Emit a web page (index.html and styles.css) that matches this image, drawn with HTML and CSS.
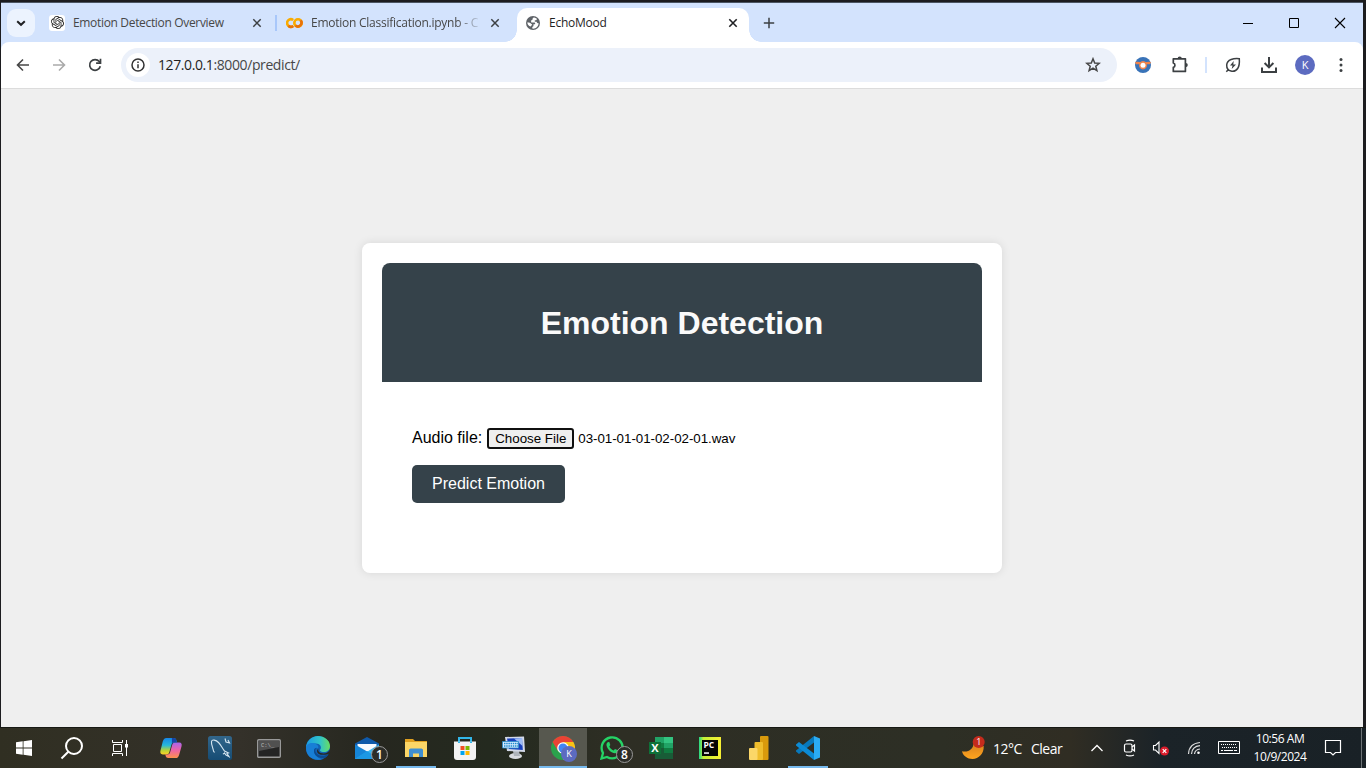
FILE: index.html
```html
<!DOCTYPE html>
<html lang="en">
<head>
<meta charset="utf-8">
<title>EchoMood</title>
<link rel="stylesheet" href="styles.css">
</head>
<body>
<div class="window">
  <header class="tabstrip">
    <div class="tab-search"><svg width="12" height="12" viewBox="0 0 12 12"><path d="M2.2 4.2 6 7.8 9.8 4.2" fill="none" stroke="#202124" stroke-width="2"/></svg></div>
    <div class="tab first">
      <span class="gpt"><svg width="13" height="13" viewBox="0 0 24 24" fill="#222"><path d="M22.2819 9.8211a5.9847 5.9847 0 0 0-.5157-4.9108 6.0462 6.0462 0 0 0-6.5098-2.9A6.0651 6.0651 0 0 0 4.9807 4.1818a5.9847 5.9847 0 0 0-3.9977 2.9 6.0462 6.0462 0 0 0 .7427 7.0966 5.98 5.98 0 0 0 .511 4.9107 6.051 6.051 0 0 0 6.5146 2.9001A5.9847 5.9847 0 0 0 13.2599 24a6.0557 6.0557 0 0 0 5.7718-4.2058 5.9894 5.9894 0 0 0 3.9977-2.9001 6.0557 6.0557 0 0 0-.7475-7.0729zm-9.022 12.6081a4.4755 4.4755 0 0 1-2.8764-1.0408l.1419-.0804 4.7783-2.7582a.7948.7948 0 0 0 .3927-.6813v-6.7369l2.02 1.1686a.071.071 0 0 1 .038.052v5.5826a4.504 4.504 0 0 1-4.4945 4.4944zm-9.6607-4.1254a4.4708 4.4708 0 0 1-.5346-3.0137l.142.0852 4.783 2.7582a.7712.7712 0 0 0 .7806 0l5.8428-3.3685v2.3324a.0804.0804 0 0 1-.0332.0615L9.74 19.9502a4.4992 4.4992 0 0 1-6.1408-1.6464zM2.3408 7.8956a4.485 4.485 0 0 1 2.3655-1.9728V11.6a.7664.7664 0 0 0 .3879.6765l5.8144 3.3543-2.0201 1.1685a.0757.0757 0 0 1-.071 0l-4.8303-2.7865A4.504 4.504 0 0 1 2.3408 7.872zm16.5963 3.8558L13.1038 8.364 15.1192 7.2a.0757.0757 0 0 1 .071 0l4.8303 2.7913a4.4944 4.4944 0 0 1-.6765 8.1042v-5.6772a.79.79 0 0 0-.407-.667zm2.0107-3.0231l-.142-.0852-4.7735-2.7818a.7759.7759 0 0 0-.7854 0L9.409 9.2297V6.8974a.0662.0662 0 0 1 .0284-.0615l4.8303-2.7866a4.4992 4.4992 0 0 1 6.6802 4.66zM8.3065 12.863l-2.02-1.1638a.0804.0804 0 0 1-.038-.0567V6.0742a4.4992 4.4992 0 0 1 7.3757-3.4537l-.142.0805L8.704 5.459a.7948.7948 0 0 0-.3927.6813zm1.0976-2.3654l2.602-1.4998 2.6069 1.4998v2.9994l-2.5974 1.4997-2.6067-1.4997Z"/></svg></span>
      <span class="label l1">Emotion Detection Overview</span>
      <svg class="x" width="10" height="10" viewBox="0 0 10 10"><path d="M1.3 1.3l7.4 7.4M8.7 1.3 1.3 8.7" stroke="#3c4043" stroke-width="1.5"/></svg>
    </div>
    <div class="sep"></div>
    <div class="tab second">
      <svg width="17" height="12" viewBox="0 0 17 12" fill="none" stroke-width="2.6"><path d="M7.2 3.1A3.7 3.7 0 1 0 7.2 8.9" stroke="#f9ab00"/><path d="M2.4 8.7a3.7 3.7 0 0 0 4.8.2" stroke="#e8710a"/><circle cx="12" cy="6" r="3.7" stroke="#f9ab00"/><path d="M9.4 8.6A3.7 3.7 0 0 0 14.6 3.4" stroke="#e8710a"/></svg>
      <span class="label l2">Emotion Classification.ipynb - C</span>
      <svg class="x" width="10" height="10" viewBox="0 0 10 10"><path d="M1.3 1.3l7.4 7.4M8.7 1.3 1.3 8.7" stroke="#3c4043" stroke-width="1.5"/></svg>
    </div>
    <div class="tab active">
      <svg width="14" height="14" viewBox="0 0 14 14"><circle cx="7" cy="7" r="7" fill="#5f6368"/><path d="M8.2 1.4C6.5 1.6 6.3 3 6.6 3.7 5.2 3.8 4.8 5 5.3 6.4h3.2c.8 0 .9 1.3.4 1.8H7.5v1.5c0 .7-.8.9-1.2 1.4v1.5C9.8 13 12.6 10.5 12.6 7c-1.2.6-1.7-.3-2-1.2H8.8V4.2h1.3c.6 0 1-.9.5-1.6C9.8 1.9 9 1.5 8.2 1.4zM1.4 6.2c1 .3 2.6.3 3.3 1.1.5.7 1.1.7 1.5 1.3L4.7 10.6C2.7 10 1.2 8.3 1.4 6.2z" fill="#fff"/></svg>
      <span class="label l3">EchoMood</span>
      <svg class="x" width="10" height="10" viewBox="0 0 10 10"><path d="M1.3 1.3l7.4 7.4M8.7 1.3 1.3 8.7" stroke="#202124" stroke-width="1.6"/></svg>
    </div>
    <svg class="plus" width="12" height="12" viewBox="0 0 12 12"><path d="M6 .8v10.4M.8 6h10.4" stroke="#3c4043" stroke-width="1.5"/></svg>
    <div class="controls">
      <svg width="12" height="12" viewBox="0 0 12 12"><path d="M1 6.5h10" stroke="#000"/></svg>
      <svg width="12" height="12" viewBox="0 0 12 12"><path d="M1.5 1.5h9v9h-9z" fill="none" stroke="#000"/></svg>
      <svg width="12" height="12" viewBox="0 0 12 12"><path d="M1 1l10 10M11 1 1 11" stroke="#000" stroke-width="1.1"/></svg>
    </div>
  </header>
  <div class="toolbar">
    <svg width="14" height="14" viewBox="0 0 14 14"><path d="M13 7H2M7 1.5 1.5 7 7 12.5" fill="none" stroke="#474747" stroke-width="1.6"/></svg>
    <svg width="14" height="14" viewBox="0 0 14 14"><path d="M1 7h11M7 1.5 12.5 7 7 12.5" fill="none" stroke="#aaa" stroke-width="1.6"/></svg>
    <svg width="14" height="14" viewBox="0 0 14 14"><path d="M12.3 8.2A5.4 5.4 0 1 1 11.3 3.6L12 4.6" fill="none" stroke="#3c4043" stroke-width="1.7"/><path d="M12.5 .8V5.2H8.1" fill="none" stroke="#3c4043" stroke-width="1.7"/></svg>
    <div class="omnibox">
      <span class="info"><svg width="14" height="14" viewBox="0 0 14 14"><circle cx="7" cy="7" r="6" fill="none" stroke="#333" stroke-width="1.5"/><path d="M7 6.3v4M7 3.5v1.6" stroke="#333" stroke-width="1.5"/></svg></span>
      <span class="url"><b>127.0.0.1</b>:8000/predict/</span>
      <svg class="star" width="16" height="16" viewBox="0 0 16 16"><path d="M8 1.8 9.7 6l4.6.3-3.5 2.9 1.1 4.5L8 11.2l-3.9 2.5 1.1-4.5L1.7 6.3 6.3 6z" fill="none" stroke="#474747" stroke-width="1.5"/></svg>
    </div>
    <div class="actions">
      <svg width="16" height="16" viewBox="0 0 16 16"><circle cx="8" cy="8" r="8" fill="#3973b8"/><path d="M0 5.3C3 4 5 5.5 5.7 4.8a4 4 0 0 1 4.6 0C11 5.5 13 4 16 5.3L14.8 7.3 11.8 7.2A4 4 0 1 1 4.2 7.2L1 7.3z" fill="#f0834a"/><circle cx="8" cy="8.2" r="2.5" fill="#fff"/></svg>
      <svg width="18" height="18" viewBox="0 0 18 18"><path d="M14.4 2.8H2.3V7a2.3 2.3 0 0 1 0 4.4v4H14.4z" fill="none" stroke="#3c4043" stroke-width="1.7" stroke-linejoin="round"/><path d="M6.6 2.5a2.1 2.1 0 0 1 4.2 0zM14.7 7a2.1 2.1 0 0 1 0 4.200z" fill="#3c4043"/></svg>
      <i></i>
      <svg width="16" height="16" viewBox="0 0 16 16"><path d="M14.3 1.7C9 1.2 2 2.2 1.7 8c-.2 7 8 8 11 3.5 2-3 1.8-7 1.6-9.8zM3.5 12.5 1.3 14.8" fill="none" stroke="#3c4043" stroke-width="1.5"/><path d="M8.7 4 5 8.5h2.5L6.7 12 11 7.4H8.3z" fill="#3c4043"/></svg>
      <svg width="18" height="18" viewBox="0 0 18 18"><path d="M9 1v10M4.6 7 9 11.4 13.4 7M2 11.5V16h14v-4.5" fill="none" stroke="#3c4043" stroke-width="2"/></svg>
      <span class="avatar">K</span>
      <svg width="4" height="16" viewBox="0 0 4 16" fill="#3c4043"><circle cx="2" cy="2.5" r="1.5"/><circle cx="2" cy="8" r="1.5"/><circle cx="2" cy="13.5" r="1.5"/></svg>
    </div>
  </div>
  <main class="page">
    <section class="card">
      <div class="card-head"><h1>Emotion Detection</h1></div>
      <form class="form">
        <div class="file-row"><label>Audio file:</label><button type="button" class="choose">Choose File</button><span class="filename">03-01-01-01-02-02-01.wav</span></div>
        <button type="button" class="predict">Predict Emotion</button>
      </form>
    </section>
  </main>
</div>
<footer class="taskbar">
  <div class="apps">
    <div class="app"><svg width="16" height="16" viewBox="0 0 16 16" fill="#fff"><path d="M0 2.3 6.7 1.3v6.3H0zM7.5 1.2 16 0v7.6H7.5zM0 8.4h6.7v6.3L0 13.8zM7.5 8.4H16V16l-8.5-1.2z"/></svg></div>
    <div class="app"><svg width="24" height="24" viewBox="0 0 24 24" fill="none" stroke="#fff" stroke-width="2"><circle cx="14" cy="10" r="8"/><path d="M8.3 15.7 1.5 22.5"/></svg></div>
    <div class="app"><svg width="16" height="16" viewBox="0 0 16 16"><path d="M.5 0v2.5h10V0M.5 16v-2.5h10V16M1.5 4.5h8v7h-8zM14.5 0v16" fill="none" stroke="#fff"/><path d="M13 4h3v3.5h-3z" fill="#fff"/></svg></div>
    <div class="app gap"><svg width="22" height="22" viewBox="0 0 24 24"><defs><linearGradient id="ca" x2="0" y2="1"><stop stop-color="#1686e8"/><stop offset=".45" stop-color="#28b8d8"/><stop offset=".75" stop-color="#b6d338"/><stop offset="1" stop-color="#ffcf25"/></linearGradient><linearGradient id="cb" x2="0" y2="1"><stop stop-color="#a865ed"/><stop offset=".5" stop-color="#f064a4"/><stop offset="1" stop-color="#ff914b"/></linearGradient></defs><path d="M7 1h8c2 0 2.5 1 3 3l.5 2h-3c-2 0-2.7 1-3.2 3l-2 7c-.6 2-1 3-3.3 3H3c-2.6 0-3-2-2.5-4L3 5c.7-2.5 1.7-4 4-4z" fill="url(#ca)"/><path d="M17 23H9c-2 0-2.5-1-3-3l-.3-1H8c2 0 2.7-1 3.2-3l2-7c.6-2 1.3-3 3.3-3H21c2.6 0 3 2 2.5 4L21 19c-.7 2.5-1.7 4-4 4z" fill="url(#cb)"/><path d="M13 1h2c2 0 2.5 1 3 3l.5 2h-3c-1 0-2 .5-2.5 1.5z" fill="#1745a5"/></svg></div>
    <div class="app"><svg width="24" height="24" viewBox="0 0 24 24"><defs><linearGradient id="my" x2="0" y2="1"><stop stop-color="#32668b"/><stop offset="1" stop-color="#164c74"/></linearGradient></defs><rect width="24" height="24" rx="2.5" fill="url(#my)"/><path d="M6.5 16.5 5.5 15C5 12 3 8 3.5 5.5 4 3 8 4 10.5 6.5c3 3 4 6.5 6 8.5l4 2-1.5.5 2 3-3-1.5-1.5-2c-.5 1-1 1-1.5.5M17 2.5l1 3.5 3.5 1-1.5-3" fill="none" stroke="#d5e5f0" stroke-width="1.1"/></svg></div>
    <div class="app"><svg width="24" height="19" viewBox="0 0 24 19"><rect x=".7" y=".7" width="22.6" height="17.6" rx="1" fill="#242424" stroke="#999" stroke-width="1.4"/><path d="M2 2h20v6L2 12z" fill="#505050"/><text x="4" y="8" font-size="5.5" fill="#bbb" class="mono">C:\_</text></svg></div>
    <div class="app"><svg width="24" height="24" viewBox="0 0 24 24"><defs><linearGradient id="ea"><stop stop-color="#1a9be5"/><stop offset=".6" stop-color="#32c5c6"/><stop offset="1" stop-color="#69dd61"/></linearGradient></defs><circle cx="12" cy="12" r="12" fill="#1262b5"/><path d="M0 12C0 5 5.5 0 12 0s12 4.5 12 10c0 4-3 6-6 6-4 0-4.5-1.5-3.6-2.7C16 11 14 7.5 10 7.5 5 7.5 1 9 0 12z" fill="url(#ea)"/><path d="M0 12c0-4 5-6 9-4.5 2.5 1 4 3 3 5-.6-1.5-4-1-4 2.5 0 4 4 7.5 8 8.2C7 25.5 0 20 0 12z" fill="#187fd6"/><path d="M10.5 12c-2 1-1.5 4.5 1 6.3 3.5 2.5 8 1.5 10.5-.3 1 .2-.5 2-2 3.2C15 24 8 20 8 15c0-2 1-3 2.5-3z" fill="#0c4b8f"/><path d="M12.5 12.5c-1 2 .5 5 5 5 3 0 5-1.5 6.5-4l-.5 4c-3 1.5-8 2-11 .2-2-1.2-2-4 0-5.2z" fill="#292922"/></svg></div>
    <div class="app"><svg width="24" height="22" viewBox="0 0 24 22"><path d="M0 6.5 12 0l12 6.5V22H0z" fill="#0f5aab"/><path d="M2.5 7h19v6L12 17l-9.5-4z" fill="#f8fbff"/><path d="M0 7.5 13 15 0 22z" fill="#1685d8"/><path d="M24 7.5V22H0z" fill="#38b6ee"/><path d="M0 22 12 14l12 8z" fill="#1c98e4"/></svg><span class="badge">1</span></div>
    <div class="app running"><svg width="22" height="18" viewBox="0 0 22 18"><path d="M0 0h8l2 2h12v5H0z" fill="#e0a020"/><path d="M0 3h22v15H0z" fill="#fbd667"/><path d="M4 18v-7.5L5.5 9.5h11l1.5 1V18h-4v-3.5H8V18z" fill="#3f8fd2"/></svg></div>
    <div class="app"><svg width="24" height="24" viewBox="0 0 24 24"><path d="M6 7V2h12v5" fill="none" stroke="#32b6e9" stroke-width="2"/><path d="M1 5.5h22V21q0 3-3 3H4q-3 0-3-3z" fill="#f3f3f3"/><path d="M6 5.5V7M18 5.5V7" stroke="#32b6e9" stroke-width="2"/><path d="M7.5 10H11.5v4h-4z" fill="#f25022"/><path d="M12.5 10h4v4h-4z" fill="#7fba00"/><path d="M7.5 15h4v4h-4z" fill="#00a4ef"/><path d="M12.5 15h4v4h-4z" fill="#ffb900"/></svg></div>
    <div class="app"><svg width="24" height="24" viewBox="0 0 24 24"><ellipse cx="13.5" cy="20" rx="6.5" ry="3" fill="#d8dbe0"/><path d="M11 15h6l1 5h-6z" fill="#aeb4bb"/><path d="M3 1 22 .5 23 16 5 15z" fill="#d3d9e8"/><path d="M5 2.5 20 2l.8 12L7 13z" fill="#173fbb"/><path d="M12 2.5 20 2l.5 8z" fill="#9dbbf5"/><path d="M.5 5.5h16v6.5H.5z" fill="#d9ecff" stroke="#248ac8" stroke-width=".8"/><path d="M2 7.5H16M2 10H16" stroke="#208ccc" stroke-width="1.5" stroke-dasharray="1.5 .7"/></svg></div>
    <div class="app current"><svg width="24" height="24" viewBox="0 0 24 24"><circle cx="12" cy="12" r="12" fill="#2ba24c"/><path d="M12 12 1.6 6A12 12 0 0 1 22.4 6z" fill="#ea4335"/><path d="M12 6h10.4A12 12 0 0 1 12 24l5-9z" fill="#fbc116"/><path d="M1.6 6 7 15l5-9z" fill="#ea4335"/><circle cx="12" cy="12" r="5.8" fill="#fff"/><circle cx="12" cy="12" r="4.5" fill="#4285f4"/></svg><span class="mini">K</span></div>
    <div class="app"><svg width="24" height="24" viewBox="0 0 24 24"><path d="M1.5 22.5 3 17A10.5 10.5 0 1 1 7 21z" fill="none" stroke="#25d366" stroke-width="2.3"/><path d="M8.5 6c-1 .2-2.3 1.5-2 3.3.8 4.2 4.8 7.7 8.5 8 2 0 3.5-1.5 3-3l-3-1.4-1.4 1.6c-2.2-.8-3.5-2.3-4.3-4l1-1.5L9.3 6z" fill="#25d366"/></svg><span class="badge">8</span></div>
    <div class="app"><svg width="24" height="22" viewBox="0 0 24 22"><path d="M6 0h18v22H6z" fill="#21a366"/><path d="M15 0h9v6h-9z" fill="#33c481"/><path d="M6 6h9v5H6z" fill="#107c41"/><path d="M15 11h9v5h-9z" fill="#107c41"/><path d="M6 11h9v11H6zM15 16h9v6h-9z" fill="#185c37"/><path d="M0 5h12v12H0z" fill="#0e7138"/><text x="6" y="15" font-size="11" font-weight="700" text-anchor="middle" fill="#fff">X</text></svg></div>
    <div class="app"><svg width="22" height="22" viewBox="0 0 22 22"><defs><linearGradient id="pc"><stop stop-color="#21d789"/><stop offset=".2" stop-color="#c5ef35"/><stop offset="1" stop-color="#f7ef34"/></linearGradient></defs><path d="M0 0h22v22H0z" fill="url(#pc)"/><path d="M3 3h16v16H3z" fill="#050505"/><text x="4.4" y="10.8" font-size="8.5" font-weight="700" fill="#fff">PC</text><path d="M5 15.3h5v1.5H5z" fill="#fff"/></svg></div>
    <div class="app"><svg width="20" height="24" viewBox="0 0 20 24"><rect x="11" width="8.5" height="24" rx="1" fill="#d99a0c"/><rect x="5.5" y="6" width="8.5" height="18" rx="1" fill="#efbd2c"/><rect y="12" width="8.5" height="12" rx="1" fill="#fbd768"/></svg></div>
    <div class="app running"><svg width="24" height="24" viewBox="0 0 24 24"><path d="M0 15.500 3 18 18 6.500V0L0 14.500z" fill="#0879bc"/><path d="M0 8.500 3 6l15 11.500V24L0 9.500z" fill="#0c8bd5"/><path d="M18 0l6 2.500v19L18 24z" fill="#2babf3"/></svg></div>
  </div>
  <div class="tray">
    <div class="weather"><svg width="24" height="24" viewBox="0 0 24 24"><defs><linearGradient id="mo" x2="0" y2="1"><stop stop-color="#d8811e"/><stop offset="1" stop-color="#ffa51e"/></linearGradient></defs><path d="M1 15.3c7 1.2 11-2.5 11.5-7.3L22.7 10c.5 7.5-5 13-11.2 13-5 0-9.5-3-10.5-7.7z" fill="url(#mo)"/><circle cx="17.7" cy="6" r="6" fill="#c42b1c"/><text x="17.7" y="9.2" font-size="9" text-anchor="middle" fill="#fff">1</text></svg><span class="temp">12°C</span><span>Clear</span></div>
    <svg class="chev" width="14" height="8" viewBox="0 0 14 8"><path d="M1.5 7 7 1.5 12.5 7" fill="none" stroke="#fff" stroke-width="1.3"/></svg>
    <svg class="meet" width="14" height="18" viewBox="0 0 14 18" fill="none" stroke="#fff" stroke-width="1.2"><path d="M3 2q4-1.8 8 0M3 16q4 1.8 8 0"/><rect x="1.5" y="5" width="7.5" height="8" rx="1.5"/><path d="m9 8 2.5-2v6L9 10"/></svg>
    <svg class="vol" width="18" height="16" viewBox="0 0 18 16"><path d="M1.5 5.5h2L7 2v11.5L3.5 10h-2z" fill="none" stroke="#fff" stroke-width="1.1"/><circle cx="12.5" cy="11" r="4.5" fill="#da1c2b"/><path d="m10.7 9.2 3.6 3.6m0-3.6-3.6 3.6" stroke="#fff" stroke-width="1.2"/></svg>
    <svg class="wifi" width="14" height="14" viewBox="0 0 14 14" fill="none" stroke="#ddd" stroke-width="1.2"><path d="M1.5 13Q2 2.5 13 1.5M4.5 13Q5 5.5 13 4.7M7.5 13Q8 8.5 13 8"/><circle cx="11.5" cy="11.7" r="1.3" fill="#fff" stroke="none"/></svg>
    <svg class="kb" width="24" height="14" viewBox="0 0 24 14" fill="none" stroke="#fff"><path d="M1.5 .5h21v12h-21z"/><path d="M4 3.5h16M5 6.5h15" stroke-dasharray="1 1"/><path d="M4 9.5h2m1 0h9m1 0h3"/></svg>
    <div class="clock"><span>10:56 AM</span><span>10/9/2024</span></div>
    <svg class="note" width="18" height="18" viewBox="0 0 18 18"><path d="M1.5 1.5h15v12h-5L9 16l-2.5-2.5h-5z" fill="none" stroke="#fff" stroke-width="1.2"/></svg>
    <div class="peek"></div>
  </div>
</footer>
</body>
</html>
```
FILE: styles.css
```css
* { box-sizing: border-box; }
body {
  margin: 0;
  width: 1366px;
  height: 768px;
  overflow: hidden;
  display: flex;
  flex-direction: column;
  background: #1c1c1f;
  font-family: "Open Sans", "Noto Sans", sans-serif;
  font-size: 12px;
}
svg { display: block; flex: none; }
.window {
  margin: 2px 3px 0 1px;
  height: 725px;
  border-top: 1px solid #4b5563;
  display: flex;
  flex-direction: column;
  background: #d3e3fd;
}
.tabstrip { height: 39px; display: flex; align-items: center; flex: none; }
.tab-search {
  width: 28px; height: 28px; margin: 0 6px; border-radius: 9px;
  background: #ecf3fe; display: flex; align-items: center; justify-content: center;
}
.tab { height: 34px; display: flex; align-items: center; white-space: nowrap; color: #474747; }
.first { width: 234px; padding-left: 8px; }
.gpt { width: 16px; height: 16px; border-radius: 3px; background: #fff; display: flex; align-items: center; justify-content: center; }
.label { margin-left: 8px; letter-spacing: -0.33px; overflow: hidden; }
.l1 { width: 170px; }
.first .x { margin-left: 9px; }
.sep { width: 2px; height: 16px; background: #a8c7fa; }
.second { width: 240px; padding-left: 9px; }
.l2 { width: 167px; letter-spacing: -0.25px; -webkit-mask-image: linear-gradient(90deg, #000 145px, transparent 172px); mask-image: linear-gradient(90deg, #000 145px, transparent 172px); }
.second .x { margin-left: 12px; }
.active {
  width: 232px; align-self: flex-end; padding: 0 0 5px 9px; position: relative;
  border-radius: 10px 10px 0 0; background: #fff; color: #1f1f1f;
}
.active::before, .active::after { content: ""; position: absolute; bottom: 0; width: 12px; height: 12px; }
.active::before { left: -12px; background: radial-gradient(circle at 0 0, transparent 11.5px, #fff 12px); }
.active::after { right: -12px; background: radial-gradient(circle at 100% 0, transparent 11.5px, #fff 12px); }
.l3 { width: 169px; margin-left: 9px; letter-spacing: -0.25px; }
.active .x { margin-left: 10px; }
.plus { margin-left: 14px; }
.controls { margin-left: auto; margin-right: 17px; display: flex; gap: 34px; }

.toolbar {
  height: 47px; flex: none; display: flex; align-items: center;
  padding-left: 15px; gap: 22px; background: #fff;
  border-radius: 8px 8px 0 0; border-bottom: 1px solid #dcdcdc;
}
.omnibox {
  width: 996px; height: 34px; margin-left: -3px; border-radius: 17px;
  background: #ecf1fa; display: flex; align-items: center; padding: 0 16px 0 5px;
}
.info { width: 24px; height: 24px; border-radius: 50%; background: #fff; display: flex; align-items: center; justify-content: center; }
.url { margin-left: 8px; padding-bottom: 1px; font-size: 14px; letter-spacing: -0.4px; color: #474747; }
.url b { font-weight: 400; color: #1f1f1f; }
.star { margin-left: auto; }
.actions { display: flex; align-items: center; margin-left: -4px; }
.actions svg:nth-child(2) { margin-left: 20px; }
.actions i { width: 2px; height: 16px; margin-left: 16px; background: #d3e3fd; }
.actions svg:nth-child(4) { margin-left: 18px; }
.actions svg:nth-child(5) { margin-left: 19px; }
.avatar {
  width: 20px; height: 20px; margin: 0 24px 0 17px; border-radius: 50%;
  background: #5c6bc0; color: #fff; font-size: 11px; line-height: 20px; text-align: center;
}

.page {
  flex: 1; background: #efefef; display: flex; align-items: center; justify-content: center;
  font-family: "Liberation Sans", Arial, sans-serif; font-size: 16px;
}
.card { width: 640px; height: 330px; padding: 20px; border-radius: 8px; background: #fff; box-shadow: 0 0 10px rgba(0, 0, 0, .1); }
.card-head { height: 119px; display: flex; align-items: center; justify-content: center; background: #35424a; border-radius: 8px 8px 0 0; }
h1 { margin: 0; color: #fafafa; font-size: 32px; line-height: 36px; }
.form { padding: 46px 30px 0; }
.file-row { height: 21px; display: flex; align-items: center; white-space: nowrap; }
.file-row label { padding-bottom: 2px; }
.choose {
  width: 87px; height: 21px; margin: 0 4px 0 5px; padding: 0; border: 2px solid #101010; border-radius: 3px;
  background: #efefef; color: #000; font: 13.33px "Liberation Sans", Arial, sans-serif;
}
.filename { font-size: 13.33px; letter-spacing: -0.03px; }
.predict {
  display: block; width: 153px; height: 38px; margin-top: 16px; padding: 0; border: 0; border-radius: 5px;
  background: #35424a; color: #fff; font: 16px "Liberation Sans", Arial, sans-serif;
}

.taskbar {
  height: 41px; display: flex; justify-content: space-between; border-top: 1px solid #171914; color: #fff;
  background: linear-gradient(90deg, #302f22 0, #34312a 240px, #26271f 380px, #242a1f 490px, #2e2e24 620px, #2d2f25 940px, #302d23 1070px, #1b2328 1160px, #192126 100%);
}
.apps { display: flex; }
.app { width: 48px; height: 40px; margin-right: 1px; position: relative; display: flex; align-items: center; justify-content: center; }
.app:nth-child(-n+3) { margin-right: 0; }
.app.gap { margin-left: 3px; }
.running::after, .current::after { content: ""; position: absolute; bottom: 0; left: 4px; right: 4px; height: 2px; background: #76b9ed; }
.current { background: #57584f; }
.current::after { left: 0; right: 0; }
.badge {
  position: absolute; left: 28px; top: 18px; width: 17px; height: 17px; border: 1px solid #999; border-radius: 50%;
  background: #2c2d28; font-size: 12px; font-weight: 600; line-height: 15px; text-align: center;
}
.mini {
  position: absolute; left: 22px; top: 18px; width: 16px; height: 16px; border-radius: 50%;
  background: #5c6bc0; font-size: 9px; line-height: 16px; text-align: center;
}
.mono { font-family: "Liberation Mono", monospace; }
.tray { display: flex; align-items: center; }
.weather { display: flex; align-items: center; font-size: 14px; letter-spacing: -0.5px; white-space: nowrap; width: 103px; }
.temp { width: 38px; margin-left: 8px; }
.chev { margin-left: 26px; }
.meet { margin-left: 19px; }
.vol { margin-left: 15px; }
.wifi { margin-left: 17px; }
.kb { margin-left: 16px; }
.clock {
  width: 60px; margin-left: 9px; display: flex; flex-direction: column; align-items: center;
  font-size: 12px; line-height: 18px; letter-spacing: -0.45px; white-space: nowrap;
}
.note { margin-left: 14px; }
.peek { width: 1px; height: 40px; margin: 0 4px 0 19px; background: #6c7275; }
```
